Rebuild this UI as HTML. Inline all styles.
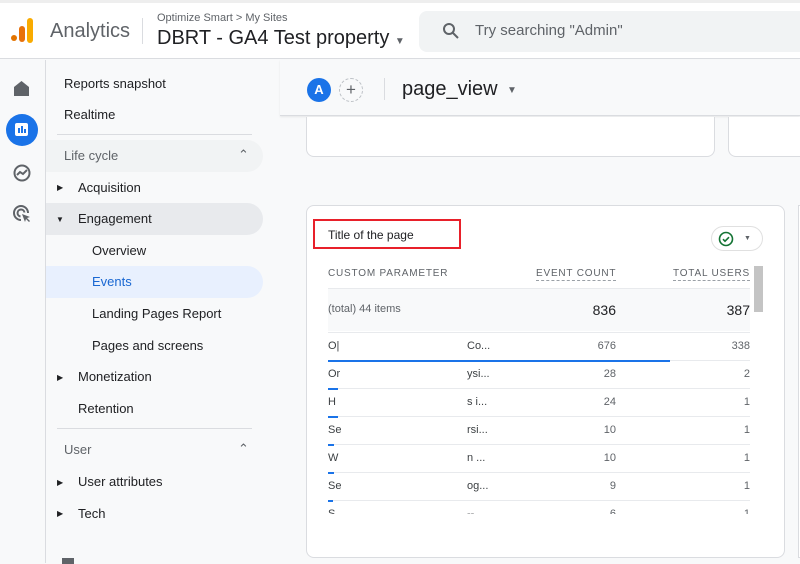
<!DOCTYPE html>
<html><head><meta charset="utf-8"><style>
*{box-sizing:border-box;margin:0;padding:0}
body{width:800px;height:563px;overflow:hidden;background:#f8f9fa;font-family:"Liberation Sans",Arial,sans-serif;color:#202124;position:relative}
.a{position:absolute}
.hdr{left:0;top:0;width:800px;height:59px;background:#fff;border-top:3px solid #eee;border-bottom:1px solid #dadce0}
.nav{font-size:13px;color:#202124;white-space:nowrap}
.tri{font-size:8px;color:#202124}
.num{text-align:right;font-size:11px;color:#5f6368}
.hline{height:1px;background:#e8eaed}
</style></head><body>
<div class="a hdr"></div>
<!-- logo -->
<div class="a" style="left:11px;top:35px;width:6px;height:6px;border-radius:3px;background:#e37400"></div>
<div class="a" style="left:19px;top:26px;width:6px;height:16px;border-radius:3px;background:#e8710a"></div>
<div class="a" style="left:27px;top:18px;width:6px;height:25px;border-radius:3px;background:#f9ab00"></div>
<div class="a" style="left:50px;top:20px;font-size:20px;color:#5f6368">Analytics</div>
<div class="a" style="left:142px;top:18px;width:1px;height:26px;background:#dadce0"></div>
<div class="a" style="left:157px;top:12px;font-size:11px;color:#5f6368">Optimize Smart &gt; My Sites</div>
<div class="a" style="left:157px;top:27px;font-size:20px;color:#202124">DBRT - GA4 Test property <span style="font-size:10px;color:#5f6368">▼</span></div>
<div class="a" style="left:419px;top:11px;width:400px;height:41px;background:#f1f3f4;border-radius:8px"></div>
<svg class="a" style="left:442px;top:22px" width="18" height="18" viewBox="0 0 18 18"><circle cx="7" cy="7" r="5" fill="none" stroke="#5f6368" stroke-width="2"/><path d="M11 11l5 5" stroke="#5f6368" stroke-width="2"/></svg>
<div class="a" style="left:475px;top:22px;font-size:15px;color:#5f6368">Try searching "Admin"</div>
<!-- rail -->
<div class="a" style="left:0;top:60px;width:46px;height:503px;background:#f8f9fa;border-right:1px solid #dadce0"></div>
<svg class="a" style="left:13px;top:80px" width="17" height="16" viewBox="0 0 17 16"><path d="M1 7L8.5 1 16 7V16H1Z" fill="#5f6368"/></svg>
<div class="a" style="left:6px;top:114px;width:32px;height:32px;border-radius:16px;background:#1a73e8"></div>
<div class="a" style="left:15px;top:123px;width:13px;height:13px;border-radius:2px;background:#fff"></div>
<div class="a" style="left:18px;top:128px;width:1.5px;height:5px;background:#1a73e8"></div>
<div class="a" style="left:21px;top:126px;width:1.5px;height:7px;background:#1a73e8"></div>
<div class="a" style="left:24px;top:129px;width:1.5px;height:4px;background:#1a73e8"></div>
<svg class="a" style="left:12px;top:163px" width="20" height="20" viewBox="0 0 20 20"><circle cx="10" cy="10" r="7.5" fill="none" stroke="#5f6368" stroke-width="2"/><path d="M5 12l3-3 3 2 4-4" fill="none" stroke="#5f6368" stroke-width="2"/></svg>
<svg class="a" style="left:12px;top:204px" width="20" height="20" viewBox="0 0 20 20"><path d="M16 9A7 7 0 1 0 9 16" fill="none" stroke="#5f6368" stroke-width="2"/><path d="M12.5 8.5A3.5 3.5 0 1 0 8.5 12.5" fill="none" stroke="#5f6368" stroke-width="2"/><path d="M10 10l8 3-3 1 3 3-1 1-3-3-1 3z" fill="#5f6368"/></svg>
<!-- nav -->
<div class="a nav" style="left:64px;top:76px">Reports snapshot</div>
<div class="a nav" style="left:64px;top:107px">Realtime</div>
<div class="a hline" style="left:57px;top:134px;width:195px;background:#dadce0"></div>
<div class="a" style="left:46px;top:140px;width:217px;height:32px;background:#f1f3f4;border-radius:0 16px 16px 0"></div>
<div class="a nav" style="left:64px;top:148px;color:#5f6368">Life cycle</div>
<div class="a nav" style="left:238px;top:147px;color:#5f6368">⌃</div>
<div class="a tri" style="left:57px;top:183px">▶</div><div class="a nav" style="left:78px;top:180px">Acquisition</div>
<div class="a" style="left:46px;top:203px;width:217px;height:32px;background:#e8eaed;border-radius:0 16px 16px 0"></div>
<div class="a tri" style="left:56px;top:215px">▼</div><div class="a nav" style="left:78px;top:211px">Engagement</div>
<div class="a nav" style="left:92px;top:243px">Overview</div>
<div class="a" style="left:46px;top:266px;width:217px;height:32px;background:#e8f0fe;border-radius:0 16px 16px 0"></div>
<div class="a nav" style="left:92px;top:274px;color:#1967d2">Events</div>
<div class="a nav" style="left:92px;top:306px">Landing Pages Report</div>
<div class="a nav" style="left:92px;top:338px">Pages and screens</div>
<div class="a tri" style="left:57px;top:373px">▶</div><div class="a nav" style="left:78px;top:369px">Monetization</div>
<div class="a nav" style="left:78px;top:401px">Retention</div>
<div class="a hline" style="left:57px;top:428px;width:195px;background:#dadce0"></div>
<div class="a nav" style="left:64px;top:442px;color:#5f6368">User</div>
<div class="a nav" style="left:238px;top:441px;color:#5f6368">⌃</div>
<div class="a tri" style="left:57px;top:478px">▶</div><div class="a nav" style="left:78px;top:474px">User attributes</div>
<div class="a tri" style="left:57px;top:509px">▶</div><div class="a nav" style="left:78px;top:506px">Tech</div>
<div class="a" style="left:62px;top:558px;width:12px;height:6px;background:#5f6368"></div>
<!-- content top bar -->
<div class="a" style="left:280px;top:60px;width:520px;height:56px;background:#f8f9fa;border-bottom:1px solid #dadce0;box-shadow:0 1px 2px rgba(0,0,0,.08)"></div>
<div class="a" style="left:307px;top:78px;width:24px;height:24px;border-radius:12px;background:#1a73e8;color:#fff;font-size:13px;font-weight:bold;text-align:center;line-height:24px">A</div>
<div class="a" style="left:339px;top:78px;width:24px;height:24px;border-radius:12px;border:1px dashed #bdc1c6;color:#5f6368;font-size:17px;text-align:center;line-height:21px">+</div>
<div class="a" style="left:384px;top:78px;width:1px;height:22px;background:#dadce0"></div>
<div class="a" style="left:402px;top:78px;font-size:20px;color:#202124">page_view</div>
<div class="a" style="left:507px;top:85px;font-size:10px;color:#5f6368">▼</div>
<!-- upper cards -->
<div class="a" style="left:306px;top:117px;width:409px;height:40px;background:#fff;border:1px solid #dadce0;border-top:none;border-radius:0 0 8px 8px"></div>
<div class="a" style="left:728px;top:117px;width:80px;height:40px;background:#fff;border:1px solid #dadce0;border-top:none;border-radius:0 0 8px 8px"></div>
<!-- main card -->
<div class="a" style="left:306px;top:205px;width:479px;height:353px;background:#fff;border:1px solid #dadce0;border-radius:8px"></div>
<div class="a" style="left:798px;top:205px;width:10px;height:353px;background:#fff;border:1px solid #dadce0"></div>
<div class="a" style="left:313px;top:219px;width:148px;height:30px;border:2px solid #e8202a"></div>
<div class="a" style="left:328px;top:228px;font-size:12px;color:#202124">Title of the page</div>
<div class="a" style="left:711px;top:226px;width:52px;height:25px;border:1px solid #e0e0e0;border-radius:13px"></div>
<svg class="a" style="left:718px;top:231px" width="16" height="16" viewBox="0 0 16 16"><circle cx="8" cy="8" r="6.5" fill="none" stroke="#137333" stroke-width="1.6"/><path d="M5 8.2l2 2 4-4" fill="none" stroke="#137333" stroke-width="1.6"/></svg>
<div class="a" style="left:744px;top:235px;font-size:7px;color:#5f6368">▼</div>
<div class="a" style="left:328px;top:268px;font-size:10px;letter-spacing:.8px;color:#5f6368">CUSTOM PARAMETER</div>
<div class="a" style="left:536px;top:268px;font-size:10px;letter-spacing:.8px;color:#5f6368;border-bottom:1px dashed #9aa0a6;padding-bottom:1px">EVENT COUNT</div>
<div class="a" style="left:673px;top:268px;font-size:10px;letter-spacing:.8px;color:#5f6368;border-bottom:1px dashed #9aa0a6;padding-bottom:1px">TOTAL USERS</div>
<div class="a" style="left:754px;top:266px;width:9px;height:46px;background:#c4c4c4"></div>
<div class="a hline" style="left:328px;top:288px;width:422px"></div>
<div class="a" style="left:328px;top:289px;width:422px;height:42px;background:#f8f9fa"></div>
<div class="a" style="left:328px;top:303px;font-size:11px;color:#5f6368">(total) 44 items</div>
<div class="a" style="left:560px;top:302px;width:56px;text-align:right;font-size:14px;color:#202124">836</div>
<div class="a" style="left:700px;top:302px;width:50px;text-align:right;font-size:14px;color:#202124">387</div>
<div class="a hline" style="left:328px;top:332px;width:422px"></div>
<!-- rows -->
<div class="a" style="left:328px;top:340px;font-size:11px;color:#3c4043">O|</div><div class="a" style="left:467px;top:340px;font-size:11px;color:#3c4043">Co...</div><div class="a num" style="left:566px;top:340px;width:50px">676</div><div class="a num" style="left:700px;top:340px;width:50px">338</div>
<div class="a" style="left:328px;top:360px;width:342px;height:2px;background:#1a73e8"></div><div class="a hline" style="left:670px;top:360px;width:80px"></div>
<div class="a" style="left:328px;top:368px;font-size:11px;color:#3c4043">Or</div><div class="a" style="left:467px;top:368px;font-size:11px;color:#3c4043">ysi...</div><div class="a num" style="left:566px;top:368px;width:50px">28</div><div class="a num" style="left:700px;top:368px;width:50px">2</div>
<div class="a hline" style="left:328px;top:388px;width:422px"></div><div class="a" style="left:328px;top:388px;width:10px;height:2px;background:#1a73e8"></div>
<div class="a" style="left:328px;top:396px;font-size:11px;color:#3c4043">H</div><div class="a" style="left:467px;top:396px;font-size:11px;color:#3c4043">s i...</div><div class="a num" style="left:566px;top:396px;width:50px">24</div><div class="a num" style="left:700px;top:396px;width:50px">1</div>
<div class="a hline" style="left:328px;top:416px;width:422px"></div><div class="a" style="left:328px;top:416px;width:10px;height:2px;background:#1a73e8"></div>
<div class="a" style="left:328px;top:424px;font-size:11px;color:#3c4043">Se</div><div class="a" style="left:467px;top:424px;font-size:11px;color:#3c4043">rsi...</div><div class="a num" style="left:566px;top:424px;width:50px">10</div><div class="a num" style="left:700px;top:424px;width:50px">1</div>
<div class="a hline" style="left:328px;top:444px;width:422px"></div><div class="a" style="left:328px;top:444px;width:6px;height:2px;background:#1a73e8"></div>
<div class="a" style="left:328px;top:452px;font-size:11px;color:#3c4043">W</div><div class="a" style="left:467px;top:452px;font-size:11px;color:#3c4043">n ...</div><div class="a num" style="left:566px;top:452px;width:50px">10</div><div class="a num" style="left:700px;top:452px;width:50px">1</div>
<div class="a hline" style="left:328px;top:472px;width:422px"></div><div class="a" style="left:328px;top:472px;width:6px;height:2px;background:#1a73e8"></div>
<div class="a" style="left:328px;top:480px;font-size:11px;color:#3c4043">Se</div><div class="a" style="left:467px;top:480px;font-size:11px;color:#3c4043">og...</div><div class="a num" style="left:566px;top:480px;width:50px">9</div><div class="a num" style="left:700px;top:480px;width:50px">1</div>
<div class="a hline" style="left:328px;top:500px;width:422px"></div><div class="a" style="left:328px;top:500px;width:5px;height:2px;background:#1a73e8"></div>
<div class="a" style="left:328px;top:508px;width:430px;height:6px;overflow:hidden"><div style="position:absolute;left:0;top:0;font-size:11px;color:#3c4043">S</div><div style="position:absolute;left:139px;top:0;font-size:11px;color:#3c4043">--</div><div style="position:absolute;left:238px;width:50px;text-align:right;top:0;font-size:11px;color:#5f6368">6</div><div style="position:absolute;left:372px;width:50px;text-align:right;top:0;font-size:11px;color:#5f6368">1</div></div>
</body></html>
